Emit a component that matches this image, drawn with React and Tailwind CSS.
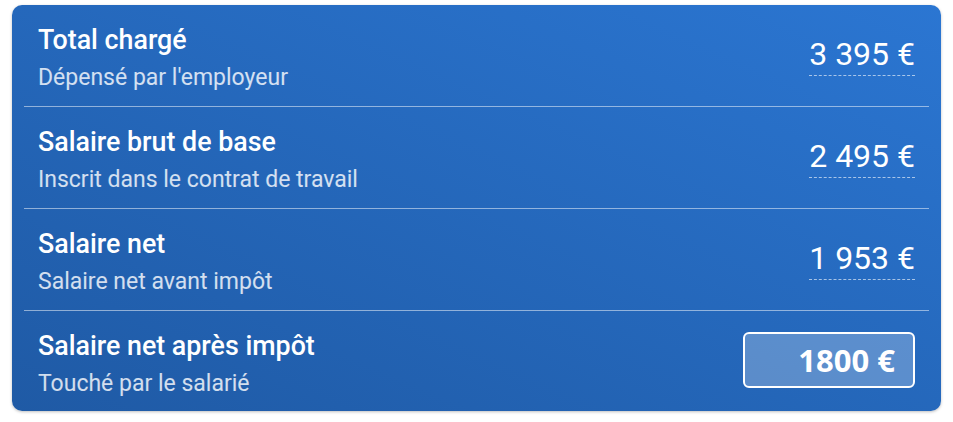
const rows = [
  { title: 'Total chargé', sub: "Dépensé par l'employeur", value: '3 395 €' },
  { title: 'Salaire brut de base', sub: 'Inscrit dans le contrat de travail', value: '2 495 €' },
  { title: 'Salaire net', sub: 'Salaire net avant impôt', value: '1 953 €' },
];

function Row({ title, sub, children, last }) {
  return (
    <div className={`flex justify-between h-[102px] pl-[14px] pr-[14px] ${last ? '' : 'border-b border-white/50'}`}>
      <div className="flex flex-col pt-[20px]">
        <span className="text-[26.8px] font-medium text-white leading-[30px]">{title}</span>
        <span className="text-[23px] text-white/80 leading-[28px] mt-[9px]">{sub}</span>
      </div>
      <div className="flex items-center">{children}</div>
    </div>
  );
}

export default function App() {
  return (
    <div className="w-[953px] h-[422px] bg-white pt-[5px] pl-[12px]" style={{ fontFamily: 'Roboto, sans-serif' }}>
      <div className="w-[929px] h-[406px] rounded-[10px] shadow-[0_1px_3px_rgba(0,0,0,0.25)] bg-gradient-to-tr from-[#1f5aa5] to-[#2b76d2] overflow-hidden">
        <div className="mx-[12px]">
          {rows.map((r) => (
            <Row key={r.title} title={r.title} sub={r.sub}>
              <span className="text-[32px] text-white leading-[36px] border-b border-dashed border-white/60 pb-[3px] mt-[1px]">
                {r.value}
              </span>
            </Row>
          ))}
          <Row title="Salaire net après impôt" sub="Touché par le salarié" last>
            <div className="w-[172px] h-[56px] rounded-[6px] border-2 border-white bg-white/25 flex items-center justify-end pr-[18px] mt-[-4px]">
              <span className="text-[31px] font-bold text-white" style={{ fontFamily: '"Open Sans", sans-serif' }}>1800 €</span>
            </div>
          </Row>
        </div>
      </div>
    </div>
  );
}
